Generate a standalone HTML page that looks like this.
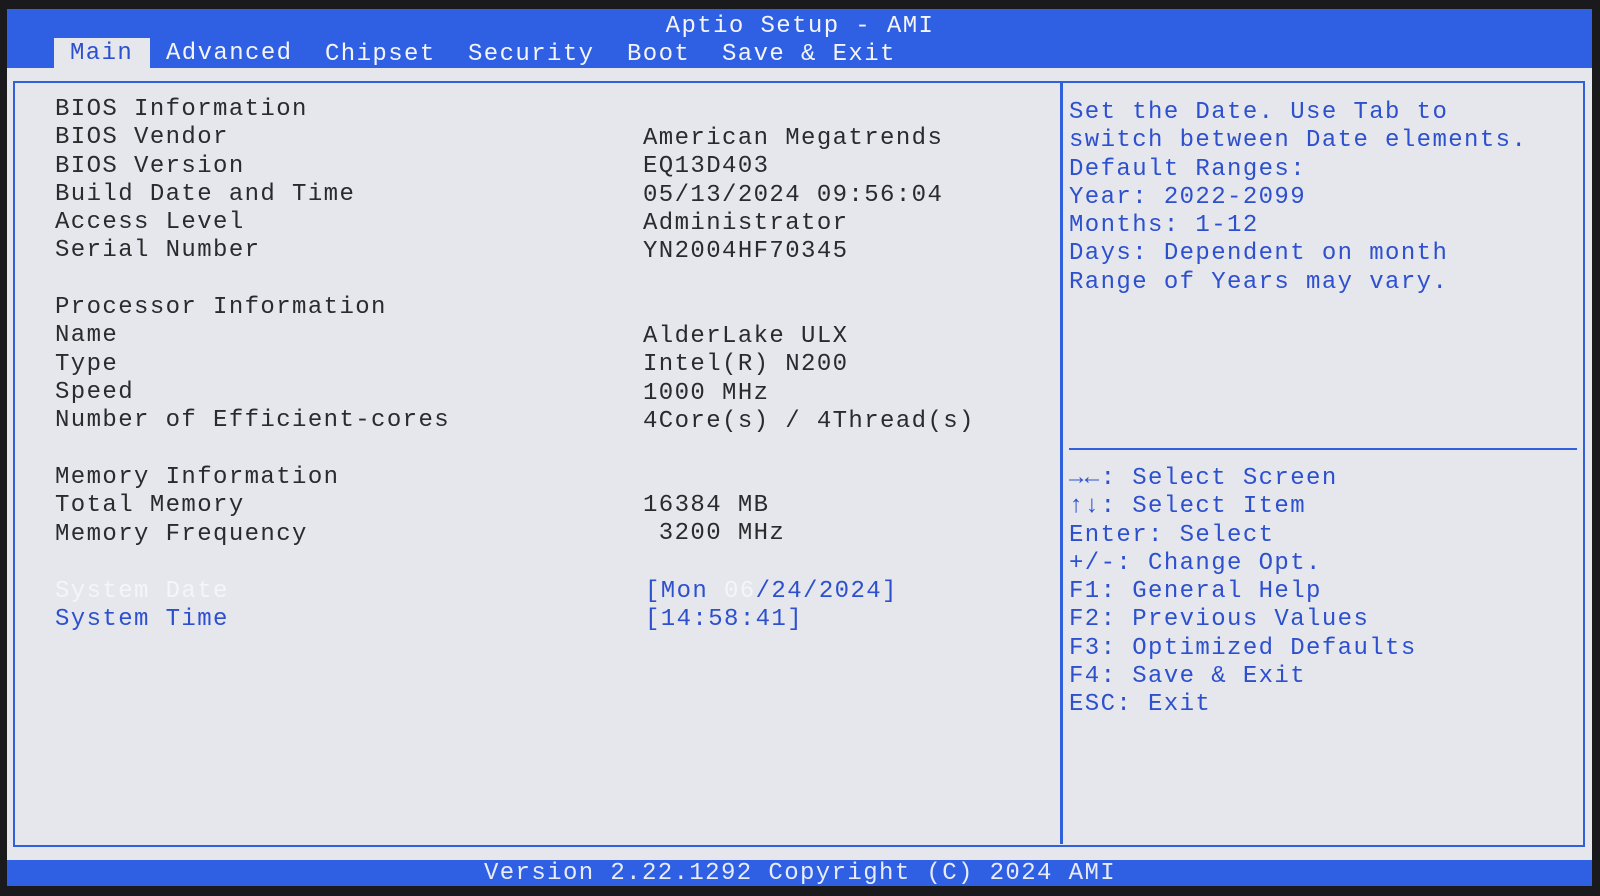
<!DOCTYPE html>
<html><head><style>
*{margin:0;padding:0}
body{width:1600px;height:896px;background:#1a1a1c;position:relative;overflow:hidden;font-family:"Liberation Mono",monospace;font-size:24px;letter-spacing:1.4px}
.t{position:absolute;white-space:pre;line-height:28.3px}
#hdr{position:absolute;left:7px;top:9px;width:1585px;height:60px;background:#2f5fe3}
#body{position:absolute;left:7px;top:68px;width:1585px;height:792px;background:#e6e7ec}
#ftr{position:absolute;left:7px;top:860px;width:1585px;height:26px;background:#2f5fe3}
.box{position:absolute;border:2px solid #3060dc}
.d{color:#2b2b2e}.b{color:#2d50cf}.w{color:#f4f5f8}
</style></head><body>
<div id="hdr"></div><div id="body"></div><div id="ftr"></div>
<div style="position:absolute;left:54px;top:38px;width:96px;height:31px;background:#e6e7ec"></div>
<div class="t w" style="left:0;width:1600px;text-align:center;top:13px">Aptio Setup - AMI</div>
<div class="t b" style="left:70px;top:40px">Main</div>
<div class="t w" style="left:166px;top:40px">Advanced</div>
<div class="t w" style="left:325px;top:41px">Chipset</div>
<div class="t w" style="left:468px;top:41px">Security</div>
<div class="t w" style="left:627px;top:41px">Boot</div>
<div class="t w" style="left:722px;top:41px">Save &amp; Exit</div>
<div class="box" style="left:13px;top:81px;width:1568px;height:762px"></div>
<div style="position:absolute;left:1060px;top:82px;width:3px;height:762px;background:#3060dc"></div>
<div style="position:absolute;left:1069px;top:448px;width:508px;height:2px;background:#3060dc"></div>
<div class="t d" style="left:55px;top:96px">BIOS Information
BIOS Vendor
BIOS Version
Build Date and Time
Access Level
Serial Number</div>
<div class="t d" style="left:643px;top:125px">American Megatrends
EQ13D403
05/13/2024 09:56:04
Administrator
YN2004HF70345</div>
<div class="t d" style="left:55px;top:294px">Processor Information
Name
Type
Speed
Number of Efficient-cores</div>
<div class="t d" style="left:643px;top:323px">AlderLake ULX
Intel(R) N200
1000 MHz
4Core(s) / 4Thread(s)</div>
<div class="t d" style="left:55px;top:464px">Memory Information
Total Memory
Memory Frequency</div>
<div class="t d" style="left:643px;top:492px">16384 MB
 3200 MHz</div>
<div class="t w" style="left:55px;top:578px">System Date</div>
<div class="t b" style="left:55px;top:606px">System Time</div>
<div class="t b" style="left:645px;top:578px">[Mon <span class="w">06</span>/24/2024]
[14:58:41]</div>
<div class="t b" style="left:1069px;top:99px">Set the Date. Use Tab to
switch between Date elements.
Default Ranges:
Year: 2022-2099
Months: 1-12
Days: Dependent on month
Range of Years may vary.</div>
<div class="t b" style="left:1069px;top:465px"><b>&#x2192;&#x2190;</b>: Select Screen
<b>&#x2191;&#x2193;</b>: Select Item
Enter: Select
+/-: Change Opt.
F1: General Help
F2: Previous Values
F3: Optimized Defaults
F4: Save &amp; Exit
ESC: Exit</div>
<div class="t w" style="left:0;width:1600px;text-align:center;top:860px;color:#e8ecf8">Version 2.22.1292 Copyright (C) 2024 AMI</div>
</body></html>
